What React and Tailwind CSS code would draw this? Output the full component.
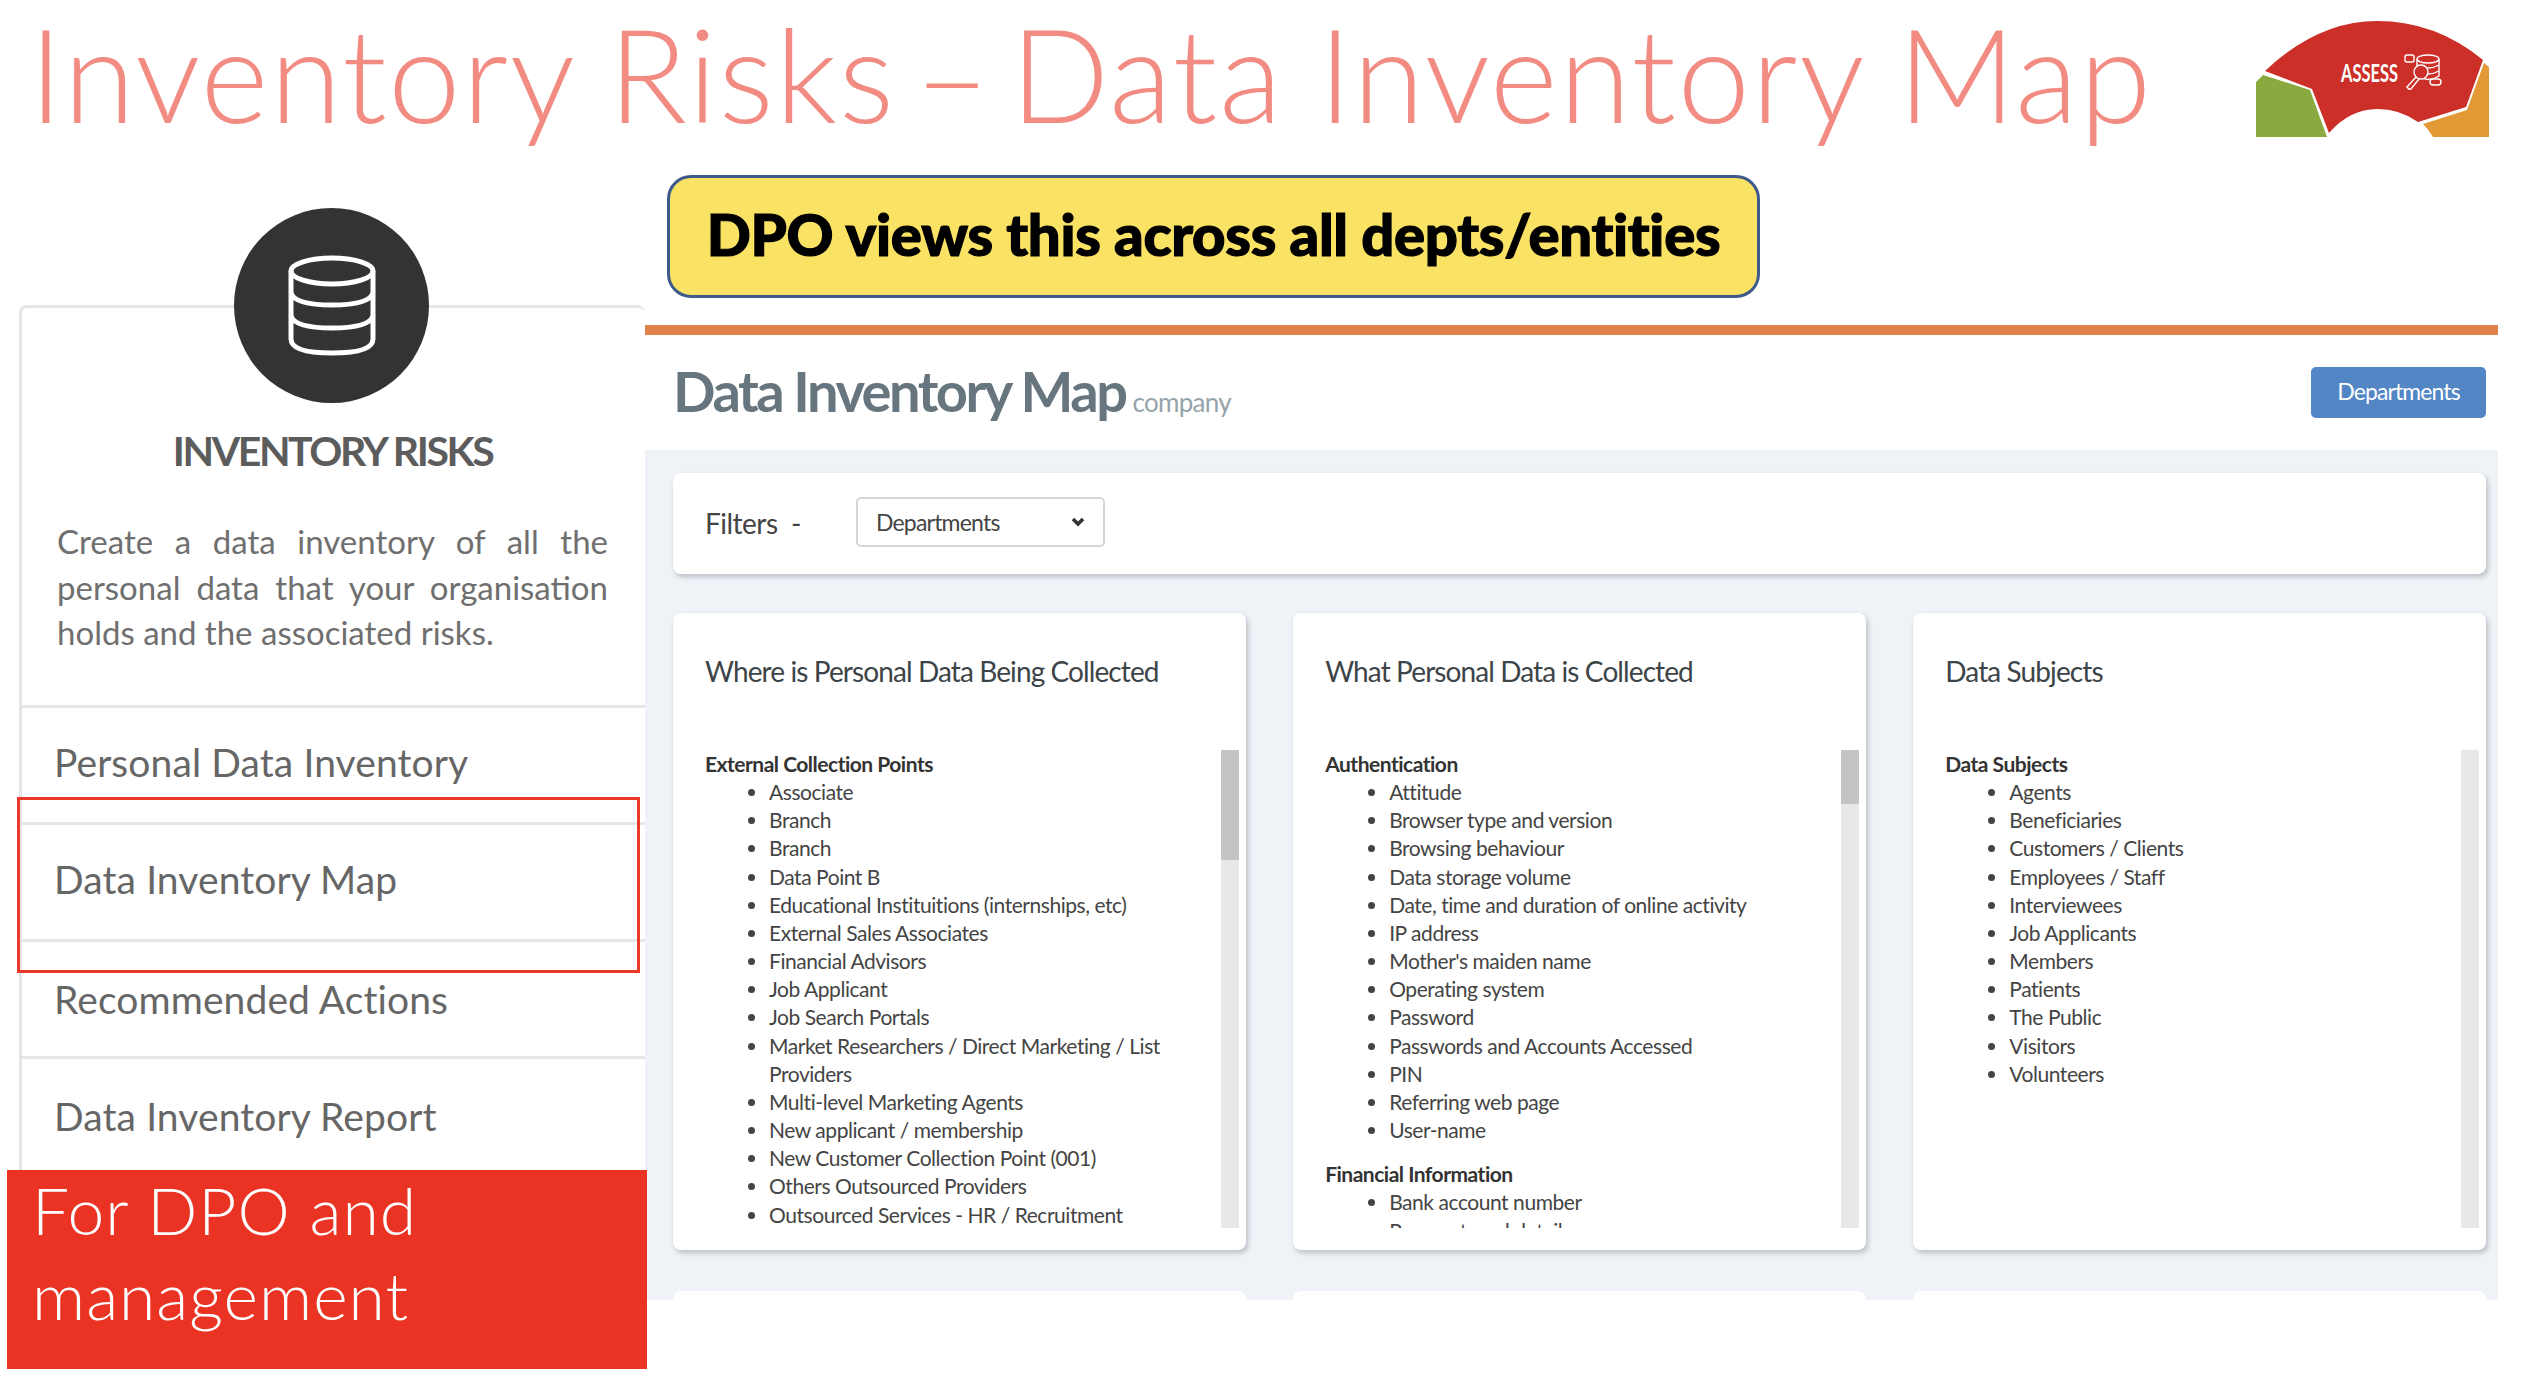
const sans = "font-['Lato','Noto_Sans',sans-serif]";

const collectionPoints = [
  "Associate",
  "Branch",
  "Branch",
  "Data Point B",
  "Educational Instituitions (internships, etc)",
  "External Sales Associates",
  "Financial Advisors",
  "Job Applicant",
  "Job Search Portals",
  "Market Researchers / Direct Marketing / List Providers",
  "Multi-level Marketing Agents",
  "New applicant / membership",
  "New Customer Collection Point (001)",
  "Others Outsourced Providers",
  "Outsourced Services - HR / Recruitment",
];

const authentication = [
  "Attitude",
  "Browser type and version",
  "Browsing behaviour",
  "Data storage volume",
  "Date, time and duration of online activity",
  "IP address",
  "Mother's maiden name",
  "Operating system",
  "Password",
  "Passwords and Accounts Accessed",
  "PIN",
  "Referring web page",
  "User-name",
];

const dataSubjects = [
  "Agents",
  "Beneficiaries",
  "Customers / Clients",
  "Employees / Staff",
  "Interviewees",
  "Job Applicants",
  "Members",
  "Patients",
  "The Public",
  "Visitors",
  "Volunteers",
];

const columns = [
  {
    title: "Where is Personal Data Being Collected",
    thumb: "h-[110px]",
    groups: [{ name: "External Collection Points", items: collectionPoints }],
  },
  {
    title: "What Personal Data is Collected",
    thumb: "h-[54px]",
    groups: [
      { name: "Authentication", items: authentication },
      { name: "Financial Information", items: ["Bank account number", "Payment card details"] },
    ],
  },
  {
    title: "Data Subjects",
    thumb: "h-0",
    groups: [{ name: "Data Subjects", items: dataSubjects }],
  },
];

const navItems = ["Personal Data Inventory", "Data Inventory Map", "Recommended Actions", "Data Inventory Report"];

const AssessLogo = () => (
  <svg width="348" height="160" viewBox="0 0 348 160" className="shrink-0">
    <path d="M56 82 L63 75 L110 90 L127 137 L56 137 Z" fill="#8aaa40" />
    <path d="M223 124 L267 110 L284 63 L289 67 L289 137 L233 137 Q229 130 223 124 Z" fill="#e39a36" />
    <path d="M65 71 Q118 21 177 21 Q236 21 283 60 L266 107 L218 122 Q200 109 177 109 Q150 109 129 133 L112 89 Z" fill="#cc2e28" />
    <text x="141" y="82" fill="#fff" fontSize="25" fontWeight="700" fontFamily="Lato, sans-serif" textLength="57" lengthAdjust="spacingAndGlyphs">ASSESS</text>
    <g fill="none" stroke="#fff" strokeWidth="1.4">
      <ellipse cx="228" cy="59" rx="11" ry="4" />
      <path d="M217 59 V76 Q228 83 239 76 V59 M217 65 Q228 71 239 65 M217 71 Q228 77 239 71" />
      <rect x="205" y="55" width="9" height="7" rx="2" />
      <rect x="230" y="79" width="11" height="6" rx="3" />
      <circle cx="221" cy="72" r="7" fill="#cc2e28" />
      <path d="M216 77 L207 87 Q209 90 211 89 L219 79" />
    </g>
  </svg>
);

const DatabaseBadge = () => (
  <div className="absolute left-[212px] top-[-100px] flex h-[195px] w-[195px] items-center justify-center rounded-full bg-[#333333]">
    <svg width="90" height="102" viewBox="0 0 90 102" fill="none" stroke="#ffffff" strokeWidth="5">
      <ellipse cx="45" cy="16" rx="41" ry="13" />
      <path d="M4 16 V84 Q4 98 45 98 Q86 98 86 84 V16" />
      <path d="M4 38 Q8 50 45 50 Q82 50 86 38" />
      <path d="M4 61 Q8 73 45 73 Q82 73 86 61" />
    </svg>
  </div>
);

const Sidebar = () => (
  <aside className="w-[645px] shrink-0 pl-[19px] pt-[130px]">
    <div className="relative h-[900px] rounded-t-[8px] border-l-[3px] border-t-[3px] border-[#e6e6e6]">
      <DatabaseBadge />
      <div className="flex h-[400px] flex-col border-b-[3px] border-[#e6e6e6] pl-[35px] pr-[37px] pt-[118px]">
        <h2 className="text-center text-[41px] leading-[50px] font-bold tracking-[-2.4px] text-[#5c5c5c]">INVENTORY RISKS</h2>
        <p className="mt-[43px] text-justify text-[33px] leading-[45.5px] text-[#6f6f6f]">
          Create a data inventory of all the personal data that your organisation holds and the associated risks.
        </p>
      </div>
      {navItems.map((label, i) => (
        <div
          key={label}
          className={`flex h-[117px] items-center border-b-[3px] border-[#e6e6e6] pl-[32px] text-[39px] tracking-[0.1px] text-[#666666] ${i < 2 ? "pb-[6px]" : ""}`}
        >
          {label}
        </div>
      ))}
    </div>
  </aside>
);

const DataCard = ({ column }) => (
  <div className="flex h-[637px] flex-col rounded-[8px] bg-white pl-[32px] pr-[7px] shadow-[2px_3px_5px_rgba(90,100,110,0.35)]">
    <h3 className="mt-[40px] h-[97px] text-[28px] leading-[36px] tracking-[-0.9px] text-[#3d4448]">{column.title}</h3>
    <div className="flex h-[478px]">
      <div className="min-w-0 flex-1 overflow-hidden pr-[40px] text-[21px] leading-[28.15px] tracking-[-0.45px] text-[#444444]">
        {column.groups.map((group) => (
          <div key={group.name} className="mb-[16px]">
            <div className="font-bold tracking-[-0.5px] text-[#333333]">{group.name}</div>
            <ul className="list-disc pl-[64px]">
              {group.items.map((item, i) => (
                <li key={i}>{item}</li>
              ))}
            </ul>
          </div>
        ))}
      </div>
      <div className="w-[18px] shrink-0 bg-[#e8e8e8]">
        <div className={`w-full bg-[#c4c4c4] ${column.thumb}`} />
      </div>
    </div>
  </div>
);

const MainPanel = () => (
  <main className="flex h-[965px] w-[1853px] shrink-0 flex-col overflow-hidden">
    <div className="flex h-[115px] shrink-0 items-center justify-between pl-[28px] pr-[12px]">
      <div className="flex -translate-y-[2px] items-baseline gap-[7px]">
        <span className="text-[56px] font-bold tracking-[-2.5px] text-[#67757f]">Data Inventory Map</span>
        <span className="text-[26px] tracking-[-0.7px] text-[#96a3ab]">company</span>
      </div>
      <button className="h-[51px] w-[175px] rounded-[5px] bg-[#5286c4] pb-[3px] text-[23px] tracking-[-0.9px] text-white">Departments</button>
    </div>
    <div className="flex-1 bg-[#eff2f7] pl-[28px] pr-[12px] pt-[23px]">
      <div className="flex h-[101px] items-center rounded-[8px] bg-white pl-[32px] shadow-[2px_3px_5px_rgba(90,100,110,0.35)]">
        <span className="w-[151px] pb-[2px] text-[28px] tracking-[-0.5px] whitespace-pre text-[#444444]">Filters  -</span>
        <div className="-mt-[3px] flex h-[50px] w-[249px] items-center justify-between rounded-[5px] border-2 border-[#d5d5d5] pl-[18px] pr-[18px] text-[23px] tracking-[-0.8px] text-[#444444]">
          Departments
          <svg width="14" height="10" viewBox="0 0 14 10" fill="none" stroke="#333" strokeWidth="3.5">
            <path d="M2 2 L7 7 L12 2" />
          </svg>
        </div>
      </div>
      <div className="mt-[39px] grid grid-cols-3 gap-x-[47.5px] gap-y-[41px]">
        {columns.map((column) => (
          <DataCard key={column.title} column={column} />
        ))}
        <div className="h-[40px] rounded-[8px] bg-white" />
        <div className="h-[40px] rounded-[8px] bg-white" />
        <div className="h-[40px] rounded-[8px] bg-white" />
      </div>
    </div>
  </main>
);

export default function App() {
  return (
    <div className={`relative h-[1382px] w-[2548px] overflow-hidden bg-white ${sans}`}>
      <header className="flex h-[175px] items-start justify-between pl-[29px]">
        <h1 className="whitespace-nowrap text-[130px] leading-[146px] font-light tracking-[1.6px] text-[#f28b82] [word-spacing:-2px]">
          Inventory Risks<span className="[word-spacing:-18px]">{" – "}</span>Data Inventory Map
        </h1>
        <AssessLogo />
      </header>
      <div className="flex items-start">
        <Sidebar />
        <div className="flex w-[1853px] shrink-0 flex-col">
          <div className="ml-[22px] flex h-[123px] w-[1093px] items-center justify-center rounded-[24px] border-[3px] border-[#3d5a8a] bg-[#f9e264] pb-[6px] text-[58px] font-black tracking-[-0.3px] text-black [-webkit-text-stroke:1.2px_#000]">
            DPO views this across all depts/entities
          </div>
          <div className="mt-[27px] h-[10px] bg-[#e0824a]" />
          <MainPanel />
        </div>
      </div>
      {/* annotations sitting over the sidebar */}
      <div className="absolute left-[17px] top-[797px] h-[176px] w-[623px] border-[3px] border-[#e8392b]" />
      <div className="absolute left-[7px] top-[1170px] h-[199px] w-[640px] bg-[#ea3323] pl-[25px] text-[66px] leading-[85px] font-light tracking-[1px] text-white">
        <div className="-mt-[3px]">
          For DPO and
          <br />
          management
        </div>
      </div>
    </div>
  );
}
